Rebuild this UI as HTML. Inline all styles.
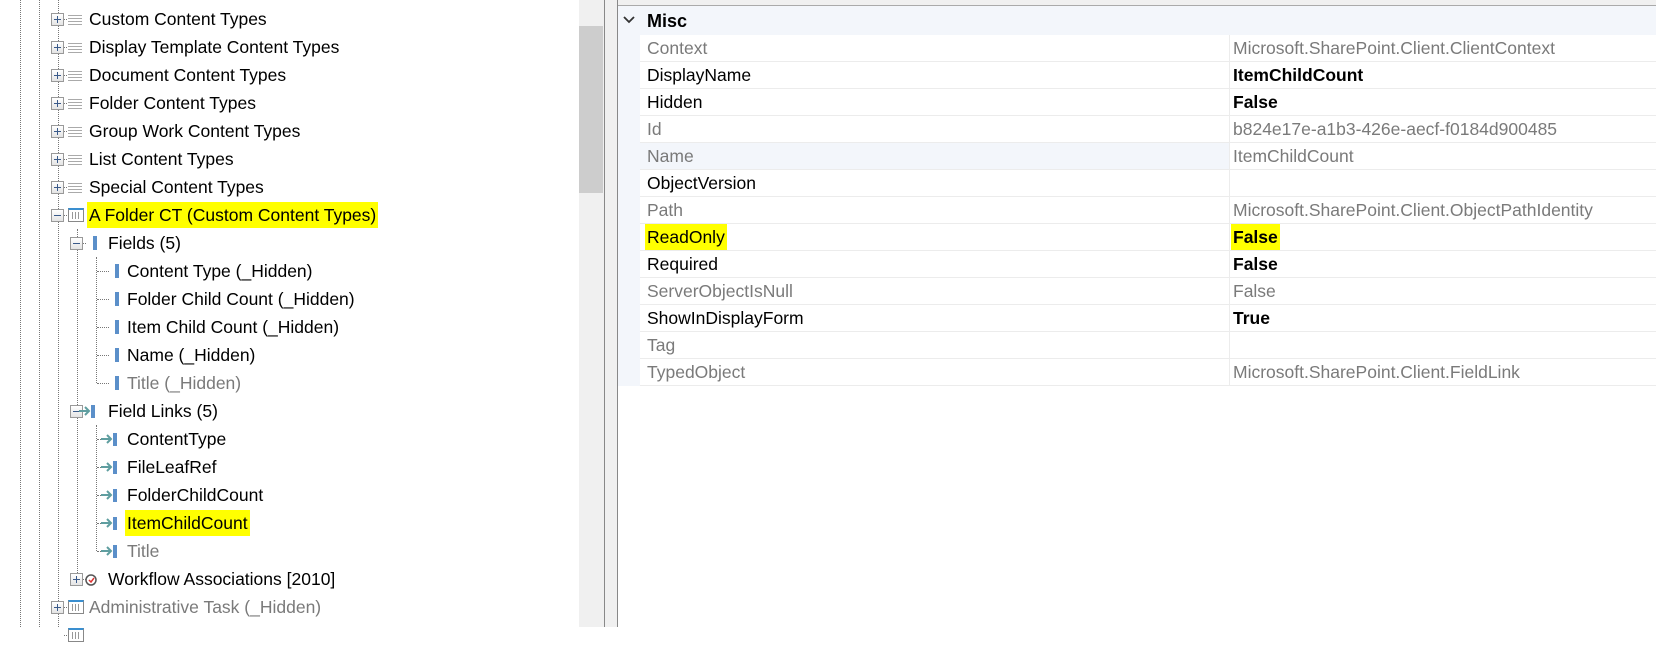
<!DOCTYPE html>
<html><head><style>
body{margin:0;width:1656px;height:627px;overflow:hidden;background:#fff;font-family:"Liberation Sans",sans-serif;font-size:17.5px;color:#000;position:relative}
.a{position:absolute}
.t{position:absolute;line-height:28px;height:28px;white-space:nowrap}
.g{color:#7a7a7a}
.vd{position:absolute;width:0;border-left:1px dotted #777}
.hd{position:absolute;height:0;border-top:1px dotted #777}
.box{position:absolute;width:11px;height:11px;border:1px solid #999;background:linear-gradient(#fff,#e4e4e4)}
.box:before{content:"";position:absolute;left:2px;right:2px;top:5px;height:1px;background:#3a5a8a}
.box.p:after{content:"";position:absolute;top:2px;bottom:2px;left:5px;width:1px;background:#3a5a8a}
.lst{position:absolute;width:14px;height:10px;background:repeating-linear-gradient(#aaa 0 1px,transparent 1px 3px)}
.grid{position:absolute;width:14px;height:11px;border:1px solid #888;border-top:2px solid #3a8fd0;background:#fff}
.grid:before{content:"";position:absolute;left:3px;top:2px;width:8px;height:7px;background:repeating-linear-gradient(90deg,#999 0 1px,#fff 1px 3px)}
.fld{position:absolute;width:4px;height:14px;background:#5b8fc9}
.lnk{position:absolute;width:20px;height:14px}
.hl{background:#ffff00}
.row{position:absolute;left:640px;right:0;height:27px;border-bottom:1px solid #ececec;box-sizing:border-box}
.row span{position:absolute;line-height:26px;white-space:nowrap}
.n{left:7px}.v{left:593px}
.b{font-weight:bold}
</style></head><body>
<div class="vd" style="left:20px;top:0;height:627px"></div>
<div class="vd" style="left:39px;top:0;height:627px"></div>
<div class="vd" style="left:58px;top:0;height:627px"></div>
<div class="vd" style="left:77px;top:229px;height:350px"></div>
<div class="vd" style="left:96px;top:257px;height:126px"></div>
<div class="vd" style="left:96px;top:425px;height:126px"></div>

<div id="tree"></div>
<script>
var rows=[
[0,'p','lst','Custom Content Types'],
[0,'p','lst','Display Template Content Types'],
[0,'p','lst','Document Content Types'],
[0,'p','lst','Folder Content Types'],
[0,'p','lst','Group Work Content Types'],
[0,'p','lst','List Content Types'],
[0,'p','lst','Special Content Types'],
[0,'m','grid','A Folder CT (Custom Content Types)','hl'],
[1,'m','fld','Fields (5)'],
[2,'','fld','Content Type (_Hidden)'],
[2,'','fld','Folder Child Count (_Hidden)'],
[2,'','fld','Item Child Count (_Hidden)'],
[2,'','fld','Name (_Hidden)'],
[2,'','fld','Title (_Hidden)','g'],
[1,'m','lnk','Field Links (5)'],
[2,'','lnk','ContentType'],
[2,'','lnk','FileLeafRef'],
[2,'','lnk','FolderChildCount'],
[2,'','lnk','ItemChildCount','hl'],
[2,'','lnk','Title','g'],
[1,'p','wf','Workflow Associations [2010]'],
[0,'p','grid','Administrative Task (_Hidden)','g'],
[0,'','grid','']
];
var h='';
rows.forEach(function(r,k){
 var cy=19+28*k, top=cy-14;
 var bx=[51,70,0][r[0]], ix=[68,88,110][r[0]], tx=[89,108,127][r[0]];
 if(r[1]) h+='<div class="box '+(r[1]=='p'?'p':'')+'" style="left:'+bx+'px;top:'+(cy-6)+'px"></div>';
 if(r[0]==2) h+='<div class="hd" style="left:97px;width:12px;top:'+cy+'px"></div>';
 else h+='<div class="hd" style="left:'+(bx+13)+'px;width:3px;top:'+cy+'px"></div>';
 var ic=r[2];
 if(ic=='lst') h+='<div class="lst" style="left:'+ix+'px;top:'+(cy-4)+'px"></div>';
 if(ic=='grid') h+='<div class="grid" style="left:'+ix+'px;top:'+(cy-7)+'px"></div>';
 if(ic=='fld') h+='<div class="fld" style="left:'+(ix+5)+'px;top:'+(cy-7)+'px"></div>';
 if(ic=='lnk') h+='<svg class="lnk" style="left:'+(ix-10)+'px;top:'+(cy-7)+'px" viewBox="0 0 20 14"><path d="M1 7h10M7 3l4 4-4 4" stroke="#5f9ea0" stroke-width="2" fill="none"/><rect x="13" y="1" width="4" height="13" fill="#5b8fc9"/></svg>';
 if(ic=='wf') h+='<svg class="lnk" style="left:'+(ix-4)+'px;top:'+(cy-7)+'px" viewBox="0 0 20 14"><circle cx="7" cy="8" r="5" stroke="#555" stroke-width="1.5" fill="none"/><path d="M5 8l2 2 3-4" stroke="#d33" stroke-width="1.5" fill="none"/></svg>';
 var cls=r[4]||'';
 h+='<div class="t '+(cls=='g'?'g':'')+'" style="left:'+(tx-2)+'px;top:'+top+'px"><span class="'+(cls=='hl'?'hl':'')+'" style="padding:3px 2px 3px 2px">'+r[3]+'</span></div>';
});
document.getElementById('tree').innerHTML=h;
</script>

<div class="a" style="left:579px;top:0;width:25px;height:627px;background:#f0f0f0"></div>
<div class="a" style="left:579px;top:26px;width:24px;height:167px;background:#cdcdcd"></div>
<div class="a" style="left:604px;top:0;width:1px;height:627px;background:#888"></div>
<div class="a" style="left:605px;top:0;width:12px;height:627px;background:#f0f0f0"></div>
<div class="a" style="left:617px;top:0;width:1px;height:627px;background:#888"></div>
<div class="a" style="left:618px;top:0;right:0;height:5px;background:#f0f0f0;border-bottom:1px solid #aaa"></div>

<div class="a" style="left:618px;top:6px;right:0;height:29px;background:#f3f6fb"></div>
<div class="a" style="left:618px;top:35px;width:22px;height:351px;background:#f3f6fb"></div>
<svg class="a" style="left:622px;top:14px" width="14" height="12" viewBox="0 0 14 12"><path d="M2 3l5 5 5-5" stroke="#333" stroke-width="1.8" fill="none"/></svg>
<div class="a b" style="left:647px;top:8px;line-height:27px;font-size:18px">Misc</div>
<div class="a" style="left:1229px;top:35px;width:1px;height:351px;background:#ececec"></div>

<div class="row" style="top:35px"><span class="n g">Context</span><span class="v g">Microsoft.SharePoint.Client.ClientContext</span></div>
<div class="row" style="top:62px"><span class="n">DisplayName</span><span class="v b">ItemChildCount</span></div>
<div class="row" style="top:89px"><span class="n">Hidden</span><span class="v b">False</span></div>
<div class="row" style="top:116px"><span class="n g">Id</span><span class="v g">b824e17e-a1b3-426e-aecf-f0184d900485</span></div>
<div class="row" style="top:143px"><div class="a" style="left:0;top:0;width:589px;height:26px;background:#f3f6fb"></div><span class="n g">Name</span><span class="v g">ItemChildCount</span></div>
<div class="row" style="top:170px"><span class="n">ObjectVersion</span></div>
<div class="row" style="top:197px"><span class="n g">Path</span><span class="v g">Microsoft.SharePoint.Client.ObjectPathIdentity</span></div>
<div class="row" style="top:224px"><span class="n hl" style="left:5px;padding:0 2px">ReadOnly</span><span class="v b hl" style="left:591px;padding:0 2px">False</span></div>
<div class="row" style="top:251px"><span class="n">Required</span><span class="v b">False</span></div>
<div class="row" style="top:278px"><span class="n g">ServerObjectIsNull</span><span class="v g">False</span></div>
<div class="row" style="top:305px"><span class="n">ShowInDisplayForm</span><span class="v b">True</span></div>
<div class="row" style="top:332px"><span class="n g">Tag</span></div>
<div class="row" style="top:359px"><span class="n g">TypedObject</span><span class="v g">Microsoft.SharePoint.Client.FieldLink</span></div>
</body></html>
